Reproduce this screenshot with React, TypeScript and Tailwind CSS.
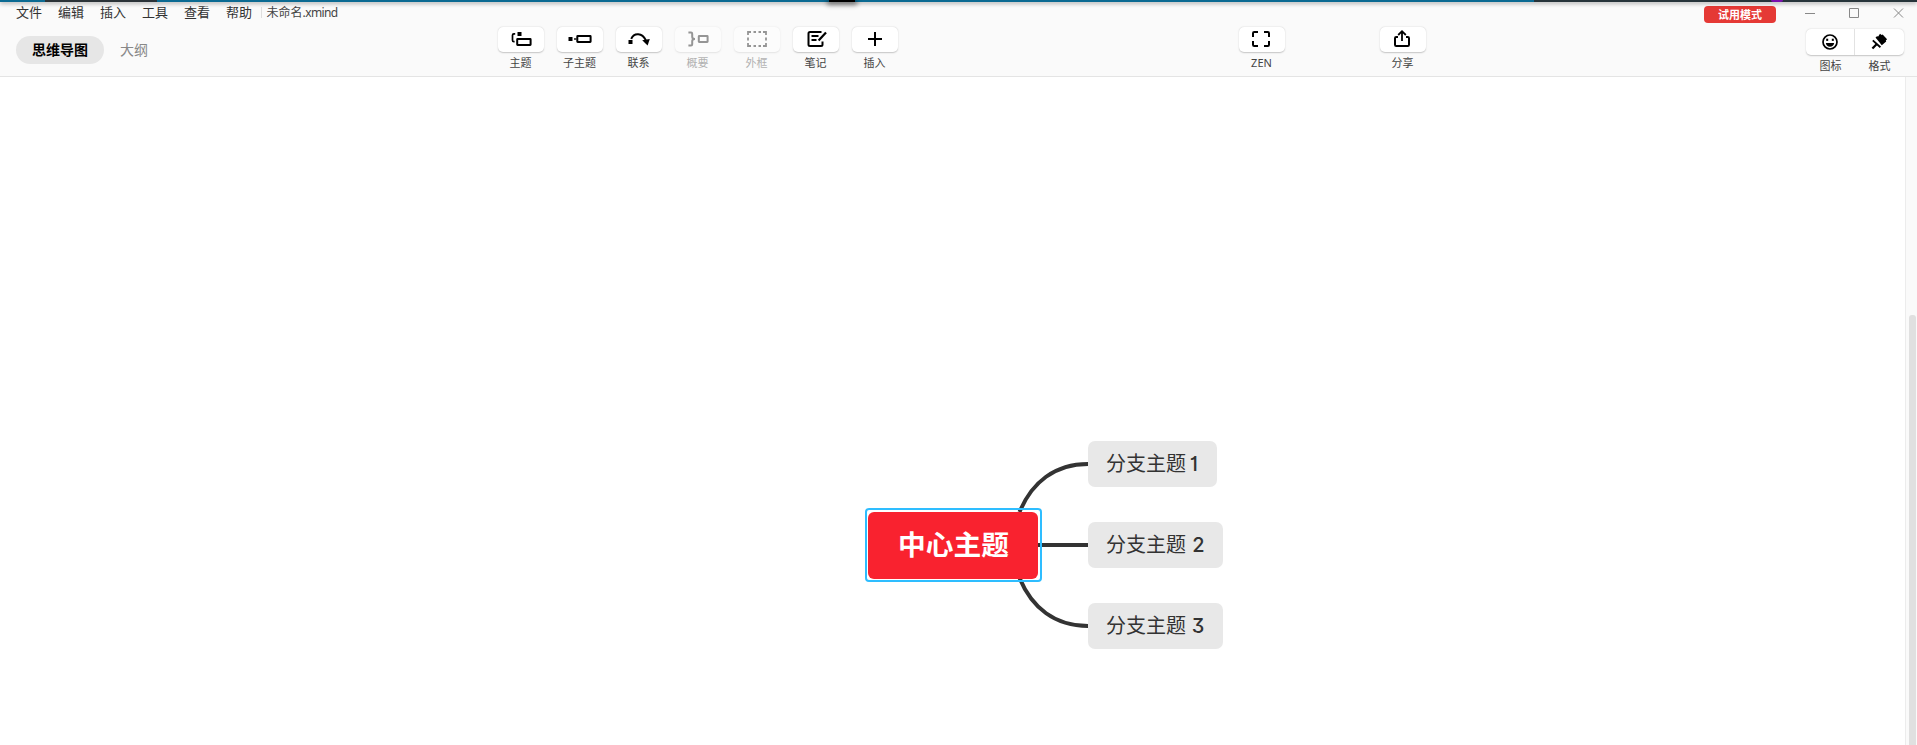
import type { ReactNode } from 'react';

const Icon = ({ children }: { children: ReactNode }) => (
  <svg width="24" height="24" viewBox="0 0 24 24" fill="none" stroke="currentColor" strokeWidth="2" className="block shrink-0">
    {children}
  </svg>
);

const TopicIcon = () => (
  <Icon>
    <rect x="8.5" y="5" width="4" height="4" fill="currentColor" stroke="none" />
    <path d="M6.2 6.9H4.9Q3.5 6.9 3.5 8.2V13.2Q3.5 14.6 4.9 14.6H5.6" strokeWidth="1.7" />
    <rect x="8.2" y="12" width="13.4" height="6" rx="0.4" />
  </Icon>
);

const SubtopicIcon = () => (
  <Icon>
    <rect x="0.5" y="10" width="4" height="4" fill="currentColor" stroke="none" />
    <path d="M6 12H8.5" strokeWidth="1.4" />
    <rect x="9.3" y="9" width="13.3" height="6" rx="0.4" />
  </Icon>
);

const RelationIcon = () => (
  <Icon>
    <rect x="1.5" y="13" width="4" height="4" fill="currentColor" stroke="none" />
    <path d="M4.2 11.8C7 5.4 15.2 5.4 18.8 13.2" />
    <path d="M15.2 13.2L22.8 12L20.6 18.4Z" fill="currentColor" stroke="none" />
  </Icon>
);

const SummaryIcon = () => (
  <Icon>
    <path d="M2.4 5.5H5Q6.2 5.5 6.2 6.8V9.8Q6.2 12 9 12Q6.2 12 6.2 14.2V17.2Q6.2 18.5 5 18.5H2.4" />
    <rect x="12.8" y="9" width="8.8" height="6" rx="0.4" />
  </Icon>
);

const BoundaryIcon = () => (
  <Icon>
    <path d="M3 8V5H6M8.5 5H11M13.5 5H16M18 5H21V8M21 10.5V13.5M21 16V19H18M16 19H13.5M11 19H8.5M6 19H3V16M3 13.5V10.5" strokeWidth="1.8" />
  </Icon>
);

const NoteIcon = () => (
  <Icon>
    <path d="M17.5 5H6Q4.5 5 4.5 6.5V17.5Q4.5 19 6 19H17Q18.5 19 18.5 17.5V14.5" />
    <path d="M7.5 9H14.5M7.5 13H12.5" strokeWidth="1.8" />
    <path d="M22 5.6L14.6 13.6" strokeWidth="2.2" />
  </Icon>
);

const PlusIcon = () => (
  <Icon>
    <path d="M12 5V19M5 12H19" />
  </Icon>
);

const ZenIcon = () => (
  <Icon>
    <path d="M3 10V6.2Q3 5 4.2 5H8M14 5H17.8Q19 5 19 6.2V10M19 14V17.8Q19 19 17.8 19H14M8 19H4.2Q3 19 3 17.8V14" />
  </Icon>
);

const ShareIcon = () => (
  <Icon>
    <path d="M7 10H5.2Q4 10 4 11.2V17.8Q4 19 5.2 19H16.8Q18 19 18 17.8V11.2Q18 10 16.8 10H15" />
    <path d="M11 14V4.5M7.2 8L11 4.2L14.8 8" strokeWidth="1.8" />
  </Icon>
);

const SmileIcon = () => (
  <Icon>
    <circle cx="12" cy="12" r="7" strokeWidth="1.7" />
    <rect x="8.2" y="8.7" width="2" height="2.2" fill="currentColor" stroke="none" />
    <rect x="13.8" y="8.7" width="2" height="2.2" fill="currentColor" stroke="none" />
    <path d="M7.8 13H16.2Q15.4 16.8 12 16.8Q8.6 16.8 7.8 13Z" fill="currentColor" stroke="none" />
  </Icon>
);

const BrushIcon = () => (
  <Icon>
    <g transform="translate(-0.8 0)">
      <path d="M8.3 7.6L9.8 6.2L11 6.6L12.8 3.8L14.4 5L15.4 4.6L19.9 9.2L18.6 10.6L19 11.6L14.6 15.2Z" fill="currentColor" stroke="none" />
      <path d="M5.6 10.4L13.2 17.2" strokeWidth="1.9" />
      <path d="M9.6 14L5.2 18.6" strokeWidth="2.2" />
    </g>
  </Icon>
);

const ToolButton = ({ label, icon, disabled = false }: { label: string; icon: ReactNode; disabled?: boolean }) => (
  <div className={`flex w-[46px] shrink-0 flex-col items-center ${disabled ? 'opacity-40' : ''}`}>
    <div className="flex h-[25px] w-[46px] items-start justify-center rounded-[5px] bg-white text-black shadow-[0_0.5px_1.5px_rgba(0,0,0,0.22)]">
      {icon}
    </div>
    <span className="mt-[3px] whitespace-nowrap text-[11px] leading-4 text-[#444]">{label}</span>
  </div>
);

const menus = ['文件', '编辑', '插入', '工具', '查看', '帮助'];

const tools = [
  { label: '主题', icon: <TopicIcon /> },
  { label: '子主题', icon: <SubtopicIcon /> },
  { label: '联系', icon: <RelationIcon /> },
  { label: '概要', icon: <SummaryIcon />, disabled: true },
  { label: '外框', icon: <BoundaryIcon />, disabled: true },
  { label: '笔记', icon: <NoteIcon /> },
  { label: '插入', icon: <PlusIcon /> },
];

const Branch = ({ name, place, nudge }: { name: string; place: string; nudge: string }) => (
  <div className={`absolute left-[1088px] flex h-[46px] items-center rounded-[7px] bg-[#e8e8e8] pl-[18px] text-[20px] text-[#333] ${place}`}>
    <span className="whitespace-pre">分支主题 </span>
    <span className={`font-[Inter] text-[20px] font-medium [font-feature-settings:'cv01','cv09'] ${nudge}`}>{name}</span>
  </div>
);

export default function App() {
  return (
    <div className="relative flex h-[745px] w-[1917px] flex-col overflow-hidden bg-white font-['Noto_Sans','Noto_Sans_CJK_SC',sans-serif]">
      <div className="relative z-10 flex h-[2px] shrink-0 bg-[#0b6a92] shadow-[0_1px_4px_rgba(0,0,0,0.5)]">
        <div className="ml-[45px] w-[112px] bg-[#2b3338]" />
        <div className="ml-[672px] w-[26px] bg-black shadow-[0_1px_5px_2px_rgba(0,0,0,0.45)]" />
        <div className="ml-[679px] flex flex-1 bg-[#26343a]">
          <div className="ml-[237px] w-[12px] rounded-b-full bg-[#7a0fae]" />
        </div>
      </div>

      <header className="flex h-[75px] shrink-0 border-b border-[#e4e4e4] bg-[#fafafa]">
        <div className="flex w-[497px] shrink-0 flex-col">
          <div className="flex h-[20px] items-center gap-4 pl-4 text-[13px] text-[#333]">
            {menus.map((m) => (
              <span key={m} className="w-[26px] whitespace-nowrap leading-5">{m}</span>
            ))}
            <span className="-ml-[7px] h-[11px] w-px bg-[#dedede]" />
            <span className="-ml-[11.5px] whitespace-nowrap pt-[2px] text-[12px] leading-5 text-[#444]">
              未命名<span className="tracking-[-0.6px]">.xmind</span>
            </span>
          </div>
          <div className="mt-[14px] flex h-7 items-center pl-4 text-[14px]">
            <div className="flex h-7 w-[88px] items-center justify-center rounded-full bg-[#e6e6e6] pb-[2px] font-bold text-black">思维导图</div>
            <span className="ml-4 pb-[2px] text-[#888]">大纲</span>
          </div>
        </div>

        <div className="flex shrink-0 gap-[13px] pl-[0.5px] pt-[25px]">
          {tools.map((t) => (
            <ToolButton key={t.label} {...t} />
          ))}
        </div>
        <div className="ml-[341px] flex shrink-0 gap-[95px] pt-[25px]">
          <ToolButton label="ZEN" icon={<ZenIcon />} />
          <ToolButton label="分享" icon={<ShareIcon />} />
        </div>

        <div className="ml-auto flex w-[213px] shrink-0 flex-col">
          <div className="flex h-[27px] items-start">
            <div className="mt-1 flex h-[17px] w-[72px] items-center justify-center rounded-[4px] bg-[#e53935] text-[11px] font-bold leading-none text-white">试用模式</div>
            <svg width="100" height="12" viewBox="0 0 100 12" className="ml-[29px] mt-[5px]" fill="none" stroke="#888" strokeWidth="1">
              <path d="M0 6.5H10M44.5 1.5H53.5V10.5H44.5ZM89 1.5L98 10.5M98 1.5L89 10.5" />
            </svg>
          </div>
          <div className="ml-[102px] flex h-[26px] w-[98px] rounded-[5px] bg-white text-black shadow-[0_0.5px_1.5px_rgba(0,0,0,0.22)]">
            <div className="flex w-[49px] items-center justify-center border-r border-[#e2e2e2]"><SmileIcon /></div>
            <div className="flex w-[49px] items-center justify-center"><BrushIcon /></div>
          </div>
          <div className="ml-[102px] mt-[3px] flex w-[98px] text-center text-[11px] leading-4 text-[#444]">
            <span className="w-[49px]">图标</span>
            <span className="w-[49px]">格式</span>
          </div>
        </div>
      </header>

      <main className="flex flex-1 justify-end">
        <div className="w-[12px] border-l border-[#ececec] bg-[#fafafa] pl-[3px] pt-[238px]">
          <div className="h-[440px] w-[7px] rounded-t-[3px] bg-[#e0e0e0]" />
        </div>
      </main>

      <svg width="80" height="200" viewBox="1015 445 80 200" className="absolute left-[1015px] top-[445px]" fill="none" stroke="#333" strokeWidth="4">
        <path d="M1019.5 512C1032 482 1055 464 1088 464M1036 545H1088M1019.5 578C1032 608 1055 626 1088 626" />
      </svg>
      <div className="absolute left-[864.5px] top-[508px] h-[74px] w-[177px] rounded-[4px] border-2 border-[#2ebdff] p-[1.5px]">
        <div className="flex h-full w-full items-center justify-center rounded-[6px] bg-[#f9222f] pl-px text-[27.7px] font-bold leading-none text-white">中心主题</div>
      </div>
      <Branch name="1" place="top-[441px] w-[129px]" nudge="-ml-[1.5px]" />
      <Branch name="2" place="top-[522px] w-[135px]" nudge="ml-px" />
      <Branch name="3" place="top-[603px] w-[135px]" nudge="ml-[0.5px]" />
    </div>
  );
}
